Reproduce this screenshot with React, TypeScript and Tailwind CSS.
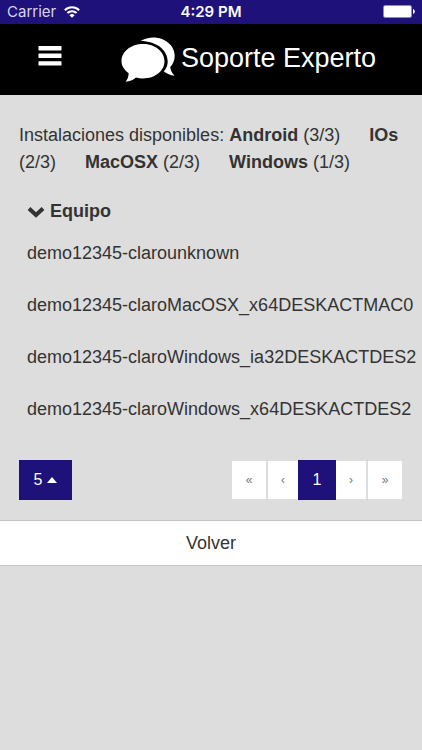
import { useState } from "react";

const installs = [
  { name: "Android", used: "(3/3)" },
  { name: "IOs", used: "(2/3)" },
  { name: "MacOSX", used: "(2/3)" },
  { name: "Windows", used: "(1/3)" },
];

const devices = [
  "demo12345-clarounknown",
  "demo12345-claroMacOSX_x64DESKACTMAC0",
  "demo12345-claroWindows_ia32DESKACTDES2",
  "demo12345-claroWindows_x64DESKACTDES2",
];

function StatusBar() {
  return (
    <div className="grid h-6 grid-cols-3 items-center bg-[#1e1179] px-[7px] font-['Inter',sans-serif] text-[15px] leading-6 text-white">
      <div className="flex items-center gap-2 text-[#d8d5f0]">
        <span>Carrier</span>
        <svg className="h-3 w-4" viewBox="0 0 16 12" fill="none" stroke="white" strokeWidth="2">
          <path d="M.8 4.2a10.4 10.4 0 0 1 14.4 0" />
          <path d="M3.4 7.1a6.7 6.7 0 0 1 9.2 0" />
          <path d="M8 11.8 5.4 9.2a3.8 3.8 0 0 1 5.2 0Z" fill="white" stroke="none" />
        </svg>
      </div>
      <span className="text-center font-semibold">4:29 PM</span>
      <svg className="h-[14px] w-8 justify-self-end" viewBox="0 0 32 14">
        <rect x=".5" y=".5" width="28" height="12" rx="1.5" fill="none" stroke="#8f88bf" />
        <rect x="1" y="1" width="27" height="11" rx="1" fill="white" />
        <path d="M30 4c2.400.8 2.400 4.200 0 5Z" fill="white" />
      </svg>
    </div>
  );
}

function Header() {
  return (
    <header className="flex h-[71px] items-center bg-black px-[38px] pb-1 text-white">
      <button type="button" aria-label="Menú" className="pb-1">
        <svg className="h-5 w-6" viewBox="0 0 24 20" fill="white">
          <rect x=".5" y="0" width="23" height="4.4" rx=".6" />
          <rect x=".5" y="7.6" width="23" height="4.4" rx=".6" />
          <rect x=".5" y="15.2" width="23" height="4.4" rx=".6" />
        </svg>
      </button>
      <div className="ml-[59px] flex items-center gap-[6px]">
        <svg className="mt-1 h-[46px] w-[54px] shrink-0" viewBox="0 0 54 46" fill="white">
          <path d="M22 7C34 7 43.500 14.500 43.500 24.200S34 41.400 22 41.400c-2.500 0-4.800-.3-7-.9-3 2.400-6.300 3.900-10.500 4.300 2-2.400 3-5.200 3.200-8.600C3.300 33 .5 28.900.5 24.200.5 14.500 10 7 22 7Z" />
          <path d="M19.500 4C23.500 1.700 28 .5 32.500.5c11.800 0 21.200 8.300 21.200 18.200 0 4.500-1.700 8.300-4.500 11.300.4 3.200 1.600 5.700 4.300 8.700-4.300-.5-7.500-1.900-10.700-4.300 2.700-3 3.900-6.200 3.900-9.800C46.700 12.800 35 4 19.500 4Z" />
        </svg>
        <h1 className="whitespace-nowrap text-[27px] leading-8">Soporte Experto</h1>
      </div>
    </header>
  );
}

function Pager() {
  const [page, setPage] = useState(1);
  const side = "h-[38px] bg-white text-center text-xs text-[#777777]";

  return (
    <nav aria-label="Paginación" className="flex items-center">
      <button type="button" aria-label="Primera" className={`${side} mr-[2px] w-[34px]`} onClick={() => setPage(1)}>
        «
      </button>
      <button type="button" aria-label="Anterior" className={`${side} w-[30px]`} onClick={() => setPage(1)}>
        ‹
      </button>
      <button type="button" aria-current="page" className="h-10 w-[38px] bg-[#1e1179] text-base text-white">
        {page}
      </button>
      <button type="button" aria-label="Siguiente" className={`${side} mr-[2px] w-[30px]`}>
        ›
      </button>
      <button type="button" aria-label="Última" className={`${side} w-[34px]`}>
        »
      </button>
    </nav>
  );
}

export default function App() {
  return (
    <div className="min-h-screen overflow-hidden bg-[#dddddd] font-['Liberation_Sans',Arial,sans-serif] text-lg leading-[27px] text-[#333333]">
      <StatusBar />
      <Header />

      <main>
        <p className="pt-[27px] pr-3 pl-[19px]">
          Instalaciones disponibles:{" "}
          {installs.map((item) => (
            <span key={item.name}>
              <strong>{item.name}</strong> <span className="mr-6">{item.used}</span>{" "}
            </span>
          ))}
        </p>

        <table className="mt-3 ml-[19px] border-collapse text-left">
          <thead>
            <tr>
              <th className="h-[43px] px-2 pt-1 pb-0">
                <button type="button" className="flex items-center gap-[5px] font-bold">
                  <svg className="h-3 w-[18px]" viewBox="0 0 18 12" fill="none" stroke="currentColor" strokeWidth="4">
                    <path d="m2 2.500 7 6.500 7-6.500" />
                  </svg>
                  Equipo
                </button>
              </th>
            </tr>
          </thead>
          <tbody>
            {devices.map((device) => (
              <tr key={device}>
                <td className="h-[52px] px-2 pt-0 pb-2 whitespace-nowrap">{device}</td>
              </tr>
            ))}
          </tbody>
        </table>

        <div className="mt-[21px] flex items-center justify-between pr-5 pl-[19px]">
          <button
            type="button"
            aria-label="Filas por página"
            className="flex h-10 w-[53px] items-center justify-center gap-[5px] bg-[#1e1179] text-base text-white"
          >
            5
            <svg className="h-[6px] w-[10px]" viewBox="0 0 10 6" fill="currentColor">
              <path d="M0 6 5 0l5 6Z" />
            </svg>
          </button>
          <Pager />
        </div>

        <a
          href="#volver"
          className="mt-5 block border-y border-[#c4c4c4] bg-white py-2 text-center text-lg leading-7"
        >
          Volver
        </a>
      </main>
    </div>
  );
}
